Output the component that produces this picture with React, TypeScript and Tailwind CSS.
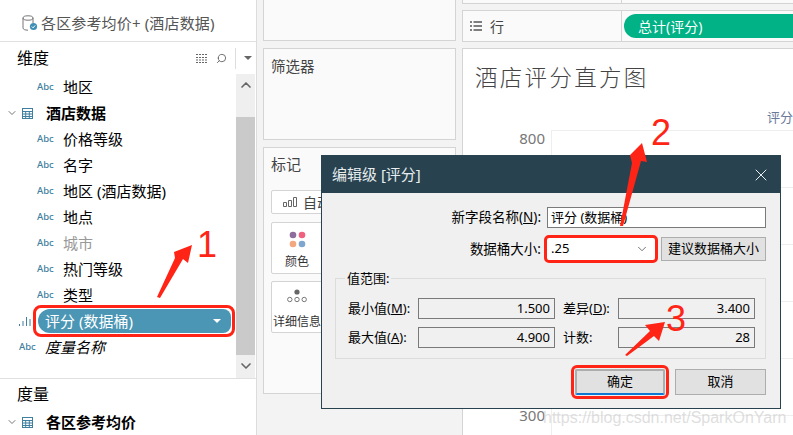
import React from 'react';
import { ChevronDown, ChevronUp, Search, X } from 'lucide-react';

const fields = [
  { name: '地区' },
  { name: '酒店数据', table: true },
  { name: '价格等级' },
  { name: '名字' },
  { name: '地区 (酒店数据)' },
  { name: '地点' },
  { name: '城市', muted: true },
  { name: '热门等级' },
  { name: '类型' },
];

const TableIcon = () => (
  <svg width="11" height="11" viewBox="0 0 11 11" className="shrink-0 text-[#3f7f9f]">
    <rect x="0.5" y="0.5" width="10" height="10" fill="none" stroke="currentColor" />
    <path d="M0 3.5h11M0 6h11M0 8.5h11M3.7 3v8M7.3 3v8" stroke="currentColor" strokeWidth="1" />
  </svg>
);

const TableRow = ({ name }: { name: string }) => (
  <div className="flex h-[26px] items-center pl-[6px]">
    <ChevronDown size={12} className="text-[#777]" />
    <span className="ml-[4px]"><TableIcon /></span>
    <span className="ml-[13px] text-[15px] font-bold text-black">{name}</span>
  </div>
);

const StatField = ({ label, hot, value, labelWidth }: { label: string; hot?: string; value: string; labelWidth: string }) => (
  <div className="flex items-center">
    <span className={`${labelWidth} text-[13px] text-black`}>
      {label}
      {hot && <>(<span className="underline">{hot}</span>)</>}:
    </span>
    <div className="flex h-[21px] w-[137px] items-center justify-end border border-[#7a7a7a] bg-[#f0f0f0] pr-[4px] text-[13px] text-black">
      {value}
    </div>
  </div>
);

export default function App() {
  return (
    <div className="relative flex h-[435px] w-[793px] overflow-hidden bg-[#f3f3f3] font-['Noto_Sans','Noto_Sans_CJK_SC',sans-serif]">
      {/* data pane */}
      <div className="flex w-[257px] shrink-0 flex-col border-r border-[#dcdcdc] bg-white">
        <div className="flex h-[42px] shrink-0 items-center border-b border-[#e0e0e0] pl-[22px] pt-[5px]">
          <svg width="18" height="17" viewBox="0 0 18 17" className="shrink-0">
            <ellipse cx="6" cy="3" rx="5" ry="2.2" fill="none" stroke="#777" />
            <path d="M1 3v10c0 1.3 2 2.2 5 2.2M11 3v5" fill="none" stroke="#777" />
            <circle cx="11.5" cy="11.5" r="3.6" fill="#3f8fb5" />
            <path d="M9.8 11.5l1.3 1.3 2-2.3" fill="none" stroke="#fff" />
          </svg>
          <span className="ml-px text-[15px] tracking-[0.15px] text-[#555]">各区参考均价+ (酒店数据)</span>
        </div>

        <div className="flex h-[32px] shrink-0 items-center pl-[17px]">
          <span className="text-[16px] text-black">维度</span>
          <svg width="12" height="9" viewBox="0 0 12 9" className="ml-[147px]">
            <path d="M0 .5h2M3 .5h9M0 3.5h2M3 3.5h9M0 6h2M3 6h9M0 8.5h2M3 8.5h9" stroke="#666" strokeDasharray="2 1" />
          </svg>
          <Search size={11} className="ml-[8px] -scale-x-100 text-[#666]" />
          <div className="ml-[8px] h-[21px] w-px bg-[#ddd]" />
          <div className="ml-[8px] h-0 w-0 border-x-[4px] border-t-[4px] border-x-transparent border-t-[#666]" />
        </div>

        <div className="flex h-[304px] shrink-0">
          <div className="w-[236px] shrink-0">
            {fields.map(f =>
              f.table ? (
                <TableRow key={f.name} name={f.name} />
              ) : (
                <div key={f.name} className="flex h-[26px] items-center pl-[37px]">
                  <span className="w-[26px] text-[9.5px] font-medium text-[#3f7f9f]">Abc</span>
                  <span className={`text-[15px] ${f.muted ? 'text-[#999]' : 'text-black'}`}>{f.name}</span>
                </div>
              ),
            )}
            <div className="flex h-[26px] items-center">
              <svg width="13" height="10" viewBox="0 0 13 10" className="ml-[19px] shrink-0">
                <path d="M.5 10V8M4 10V5M7.5 10V1M11 10V3" stroke="#3f7f9f" />
              </svg>
              <div className="ml-[5px] h-[24px] w-[194px] rounded-[4px] pl-px outline-[3px] outline-offset-[1px] outline-[#ff2415]">
                <div className="flex h-full items-center justify-between rounded-l-[12px] rounded-r-[8px] bg-[#4b96b4] pl-[7px] pr-[10px] text-[15px] text-white">
                  <span>评分 (数据桶)</span>
                  <div className="h-0 w-0 border-x-[4px] border-t-[4px] border-x-transparent border-t-white" />
                </div>
              </div>
            </div>
            <div className="flex h-[26px] items-center pl-[19px]">
              <span className="w-[26px] text-[9.5px] font-medium text-[#3f7f9f]">Abc</span>
              <span className="text-[15px] italic text-black">度量名称</span>
            </div>
          </div>
          <div className="flex w-[19px] shrink-0 flex-col items-center bg-[#efefef]">
            <div className="flex h-[43px] w-full shrink-0 justify-center pt-[2px]">
              <ChevronUp size={16} strokeWidth={2.5} className="mt-[1px] text-[#666]" />
            </div>
            <div className="h-[238px] w-full shrink-0 bg-[#cacaca]" />
            <ChevronDown size={16} strokeWidth={2.5} className="mt-[3px] text-[#666]" />
          </div>
        </div>

        <div className="flex h-[31px] shrink-0 items-center border-t border-[#e0e0e0] pl-[17px]">
          <span className="text-[16px] text-black">度量</span>
        </div>
        <TableRow name="各区参考均价" />
      </div>

      {/* filter and marks cards */}
      <div className="ml-[6px] flex w-[193px] shrink-0 flex-col">
        <div className="h-[41px] shrink-0 border-x border-b border-[#d4d4d4] bg-[#fafafa]" />
        <div className="mt-[7px] h-[92px] shrink-0 border border-[#d4d4d4] bg-[#fafafa] pl-[7px] pt-[7px] text-[14.5px] text-[#444]">
          筛选器
        </div>
        <div className="mt-[7px] h-[247px] shrink-0 border border-[#d4d4d4] bg-[#fafafa] pl-[7px] pt-[6px]">
          <div className="text-[15px] leading-[20px] text-[#444]">标记</div>
          <div className="mt-[16px] flex h-[24px] w-[177px] items-center rounded-[2px] border border-[#d4d4d4] bg-white pl-[11px] text-[14px] text-[#444]">
            <svg width="14" height="10" viewBox="0 0 14 10">
              <path d="M.5 5.5h3v4h-3zM5.5 3.5h3v6h-3zM10.5.5h3v9h-3z" fill="none" stroke="#666" />
            </svg>
            <span className="ml-[6px]">自动</span>
          </div>
          <div className="mt-[8px] flex h-[52px] w-[52px] flex-col items-center rounded-[2px] border border-[#d4d4d4] bg-white pt-[8px]">
            <svg width="17" height="17" viewBox="0 0 17 17">
              <circle cx="4" cy="4" r="3.3" fill="#8c6d9c" />
              <circle cx="13" cy="4" r="3.3" fill="#f0617f" />
              <circle cx="4" cy="13" r="3.3" fill="#f4a880" />
              <circle cx="13" cy="13" r="3.3" fill="#7ea6cf" />
            </svg>
            <span className="mt-[5px] text-[12px] leading-[18px] text-[#333]">颜色</span>
          </div>
          <div className="mt-[7px] flex h-[52px] w-[52px] flex-col items-center overflow-hidden rounded-[2px] border border-[#d4d4d4] bg-white pt-[7px]">
            <svg width="20" height="14" viewBox="0 0 20 14">
              <circle cx="10" cy="3" r="2.6" fill="#666" />
              <circle cx="2.8" cy="10.5" r="2.2" fill="none" stroke="#777" />
              <circle cx="10" cy="10.5" r="2.2" fill="none" stroke="#777" />
              <circle cx="17.2" cy="10.5" r="2.2" fill="none" stroke="#777" />
            </svg>
            <span className="mt-[10px] whitespace-nowrap text-[12px] leading-[18px] text-[#333]">详细信息</span>
          </div>
        </div>
      </div>

      {/* shelves and view */}
      <div className="ml-[6px] flex min-w-0 flex-1 flex-col">
        <div className="flex h-[4px] shrink-0 border-b border-l border-[#d4d4d4] bg-[#fafafa]">
          <div className="w-[159px] border-r border-[#d4d4d4]" />
        </div>
        <div className="mt-[6px] flex h-[32px] shrink-0 border-y border-l border-[#d4d4d4] bg-[#fafafa]">
          <div className="flex w-[159px] items-center border-r border-[#d4d4d4] pl-[7px]">
            <svg width="12" height="10" viewBox="0 0 12 10">
              <path d="M0 1h2M3.5 1H12M0 5h2M3.5 5H12M0 9h2M3.5 9H12" stroke="#555" strokeWidth="1.6" />
            </svg>
            <span className="ml-[8px] text-[14px] text-[#444]">行</span>
          </div>
          <div className="ml-[2px] mt-[3px] flex h-[24px] flex-1 items-center rounded-l-[12px] bg-[#00b286] pl-[14px] text-[14px] text-white">
            总计(评分)
          </div>
        </div>
        <div className="mt-[6px] flex-1 border-l border-t border-[#d4d4d4] bg-white">
          <div className="mt-[9px] pl-[12px] text-[22.5px] font-light leading-[40px] tracking-[2.3px] text-[#444]">酒店评分直方图</div>
          <div className="mt-[11px] h-[16px] whitespace-nowrap pl-[304px] text-[13px] leading-[16px] text-[#6a7a9a]">评分</div>
          <div className="mt-[5px] flex">
            {/* the labels in between sit behind the dialog */}
            <div className="flex h-[293px] w-[82px] shrink-0 flex-col justify-between text-right text-[15px] leading-[16px] text-[#777]">
              <div>800</div>
              <div>300</div>
            </div>
            <div className="ml-[6px] flex-1 border-l border-[#eeeeee]">
              {[0, 1, 2, 3, 4, 5].map(i => (
                <div key={i} className="h-[57px] border-t border-[#eeeeee]" />
              ))}
            </div>
          </div>
        </div>
      </div>

      {/* edit bins dialog */}
      <div className="absolute left-[321px] top-[155px] flex h-[254px] w-[460px] flex-col border border-[#28434f] bg-[#f0f0f0] text-black">
        <div className="flex h-[37px] shrink-0 items-center justify-between bg-[#28434f] pl-[10px] pr-[9px] text-[15px] text-[#e8eef0]">
          <span>编辑级 [评分]</span>
          <X size={20} strokeWidth={1.2} />
        </div>
        <div className="mt-[14px] flex h-[21px] items-center">
          <div className="w-[219px] text-right text-[13.5px]">新字段名称(<span className="underline">N</span>):</div>
          <div className="ml-[6px] flex h-[21px] w-[219px] items-center border border-[#7a7a7a] bg-white pl-[3px] text-[13px]">评分 (数据桶)</div>
        </div>
        <div className="mt-[9px] flex h-[24px] items-center">
          <div className="w-[219px] text-right text-[13.5px]">数据桶大小:</div>
          <div className="ml-[6px] flex h-[22px] w-[108px] items-center justify-between rounded-[2px] bg-white pl-[4px] pr-[6px] text-[13px] outline-[3px] outline-[#ff2415]">
            <span>.25</span>
            <ChevronDown size={14} strokeWidth={1.4} className="text-[#555]" />
          </div>
          <div className="ml-[6px] flex h-[24px] w-[105px] items-center justify-center border border-[#adadad] bg-[#e1e1e1] text-[13px]">建议数据桶大小</div>
        </div>
        <div className="relative ml-[13px] mt-[17px] h-[81px] w-[431px] border border-[#dcdcdc] pl-[12px] pt-[19px]">
          <span className="absolute -top-[10px] left-[9px] bg-[#f0f0f0] px-[2px] text-[13px] leading-[18px]">值范围:</span>
          <div className="flex">
            <StatField label="最小值" hot="M" value="1.500" labelWidth="w-[70px]" />
            <div className="ml-[8px]"><StatField label="差异" hot="D" value="3.400" labelWidth="w-[55px]" /></div>
          </div>
          <div className="mt-[8px] flex">
            <StatField label="最大值" hot="A" value="4.900" labelWidth="w-[70px]" />
            <div className="ml-[8px]"><StatField label="计数" value="28" labelWidth="w-[55px]" /></div>
          </div>
        </div>
        <div className="ml-[253px] mt-[10px] flex">
          <div className="flex h-[26px] w-[90px] items-center justify-center rounded-[2px] border-2 border-[#0f78d4] border-t-[#adadad] border-x-[#adadad] bg-[#e1e1e1] text-[13px] outline-[3px] outline-offset-[1px] outline-[#ff2415]">确定</div>
          <div className="ml-[10px] flex h-[26px] w-[91px] items-center justify-center border border-[#adadad] bg-[#e1e1e1] text-[13px]">取消</div>
        </div>
      </div>

      {/* red annotations */}
      <svg width="793" height="435" viewBox="0 0 793 435" className="pointer-events-none absolute inset-0">
        <polygon points="157,297 175,258 174,252 192,245 188,263 183,259 160,298" fill="#ff2415" />
        <polygon points="620,226 632,163 630,155 642,143 647,162 641,161 623,226" fill="#ff2415" />
        <polygon points="625,355 650,331 645,325 665,322 659,341 654,336 627,356" fill="#ff2415" />
      </svg>
      <span className="absolute left-[197px] top-[225px] font-['Liberation_Sans',sans-serif] text-[36px] leading-[40px] text-[#ff2415]">1</span>
      <span className="absolute left-[651px] top-[113px] font-['Liberation_Sans',sans-serif] text-[36px] leading-[40px] text-[#ff2415]">2</span>
      <span className="absolute left-[666px] top-[299px] font-['Liberation_Sans',sans-serif] text-[36px] leading-[40px] text-[#ff2415]">3</span>
      <span className="absolute left-[543px] top-[408px] whitespace-nowrap font-['Liberation_Sans',sans-serif] text-[16px] leading-[20px] text-[#d0d0d0]/70">https://blog.csdn.net/SparkOnYarn</span>
    </div>
  );
}
